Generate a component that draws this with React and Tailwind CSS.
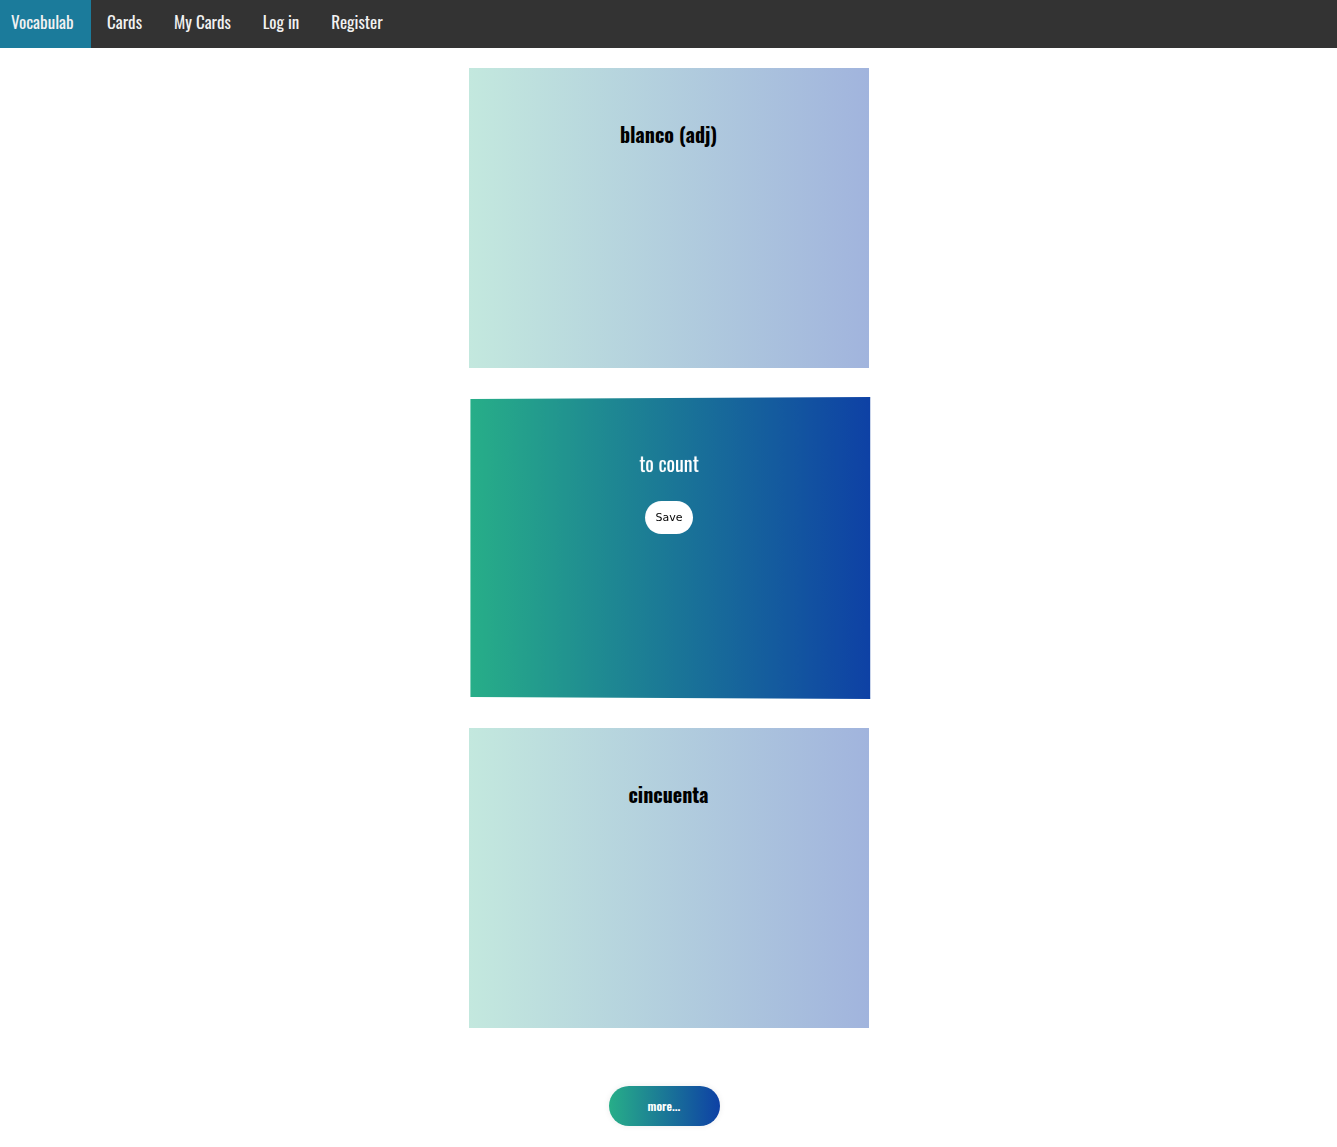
import React from "react";

const HEAD = { fontFamily: '"Oswald", "Liberation Sans Narrow", "DejaVu Sans Condensed", sans-serif' };

function NavItem({ label, w, active }) {
  return (
    <a
      href="#"
      className={
        "flex h-full items-center pb-[5px] text-[17px] leading-none text-[#f2f2f2] " +
        w +
        (active ? " justify-start bg-[#1b7b9b] pl-[11px]" : " justify-center")
      }
      style={HEAD}
    >
      {label}
    </a>
  );
}

function LightCard({ title }) {
  return (
    <div className="h-[300px] w-[400px] bg-[linear-gradient(to_right,#c3e8de,#a1b4dd)] pt-[52px] text-center">
      <h2 className="text-[20px] font-bold leading-[28px] text-black" style={HEAD}>
        {title}
      </h2>
    </div>
  );
}

export default function App() {
  return (
    <div className="min-h-[1147px] bg-white">
      <nav className="flex h-[48px] items-stretch bg-[#333333]">
        <NavItem label="Vocabulab" w="w-[91px]" active />
        <NavItem label="Cards" w="w-[67px]" />
        <NavItem label="My Cards" w="w-[89px]" />
        <NavItem label="Log in" w="w-[68px]" />
        <NavItem label="Register" w="w-[84px]" />
      </nav>
      <main className="flex flex-col items-center pt-[20px]">
        <LightCard title="blanco (adj)" />
        <div className="mt-[30px] h-[300px] w-[400px] bg-[linear-gradient(to_right,#27ae88,#0e41a5)] pt-[51px] text-center [transform:perspective(1000px)_rotateY(-1.9deg)]">
          <h2 className="text-[20px] leading-[28px] text-white" style={HEAD}>
            to count
          </h2>
          <button
            className="mt-[24px] h-[33px] w-[48px] rounded-full bg-white pt-[1px] text-[11px] text-black"
            style={{ fontFamily: '"DejaVu Sans", "Open Sans", sans-serif' }}
          >
            Save
          </button>
        </div>
        <div className="mt-[30px]">
          <LightCard title="cincuenta" />
        </div>
        <button
          className="mt-[58px] mb-[21px] mr-[9px] h-[40px] w-[111px] rounded-full bg-[linear-gradient(to_right,#27ae88,#0e41a5)] text-[12px] font-semibold text-white shadow-[0_0_6px_rgba(0,0,0,0.08)]"
          style={HEAD}
        >
          more...
        </button>
      </main>
    </div>
  );
}
